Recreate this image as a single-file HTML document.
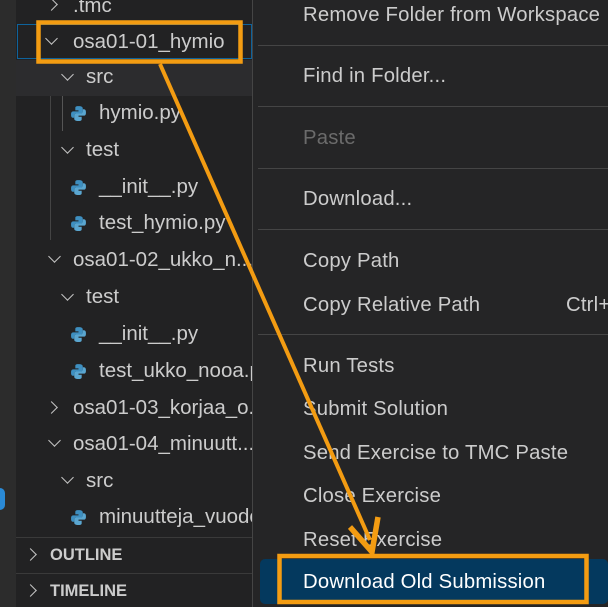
<!DOCTYPE html>
<html><head><meta charset="utf-8"><style>
*{margin:0;padding:0;box-sizing:border-box}
body{width:608px;height:607px;overflow:hidden;background:#252526;font-family:"Liberation Sans",sans-serif;position:relative}
.sb{position:absolute;left:0;top:0;width:252px;height:607px;background:#222223}
.act{position:absolute;left:0;top:0;width:16px;height:607px;background:#2c2c2c}
.t{position:absolute;color:#cccccc;font-size:20.5px;white-space:nowrap;line-height:24px}
.chev{position:absolute;width:9px;height:9px;border-right:1.8px solid #c5c5c5;border-bottom:1.8px solid #c5c5c5}
.dn{transform:rotate(45deg)}
.rt{transform:rotate(-45deg)}
.py{position:absolute;width:17px;height:17px}
.m{position:absolute;left:303px;color:#cccccc;font-size:20.3px;white-space:nowrap;line-height:24px;letter-spacing:0.2px}
.sep{position:absolute;left:258px;width:350px;height:1px;background:#454545}
.hdr{position:absolute;color:#cccccc;font-size:16.5px;font-weight:bold;line-height:20px}
.hl{position:absolute;left:16px;width:236px;height:1px;background:#3a3a3a}
</style></head><body>
<div class="sb"></div>
<div class="act"></div>
<div style="position:absolute;left:0;top:488px;width:5px;height:22px;background:#2a8ad6;border-radius:0 10px 10px 0"></div>
<div style="position:absolute;left:16px;top:60px;width:236px;height:36px;background:#2c2c2e"></div>
<div style="position:absolute;left:17px;top:24px;width:235px;height:35px;border:1px solid #0e639c"></div>
<div style="position:absolute;left:62px;top:96px;width:1px;height:35px;background:#555"></div>
<div style="position:absolute;left:50px;top:96px;width:1px;height:144px;background:#444"></div>

<div class="chev rt" style="left:47px;top:0px"></div><div class="t" style="left:73px;top:-6px">.tmc</div>
<div class="chev dn" style="left:47px;top:34px"></div><div class="t" style="left:73px;top:30px">osa01-01_hymio</div>
<div class="chev dn" style="left:63px;top:70px"></div><div class="t" style="left:86px;top:65px">src</div>
<svg class="py" style="left:70px;top:105px" viewBox="0 0 16 16"><path d="M8 1C5 1 5 2 5 3v2h3v1H3C1 6 1 8 1 9s0 3 2 3h1V10c0-1 1-2 2-2h4c1 0 2-1 2-2V3c0-1-1-2-4-2z" fill="#3e8fc0"/><path d="M8 15c3 0 3-1 3-2v-2H8v-1h5c2 0 2-2 2-3s0-3-2-3h-1v2c0 1-1 2-2 2H6c-1 0-2 1-2 2v3c0 1 1 2 4 2z" fill="#5aa6d0"/></svg>
<div class="t" style="left:99px;top:101px">hymio.py</div>
<div class="chev dn" style="left:63px;top:143px"></div><div class="t" style="left:86px;top:138px">test</div>
<svg class="py" style="left:70px;top:179px" viewBox="0 0 16 16"><path d="M8 1C5 1 5 2 5 3v2h3v1H3C1 6 1 8 1 9s0 3 2 3h1V10c0-1 1-2 2-2h4c1 0 2-1 2-2V3c0-1-1-2-4-2z" fill="#3e8fc0"/><path d="M8 15c3 0 3-1 3-2v-2H8v-1h5c2 0 2-2 2-3s0-3-2-3h-1v2c0 1-1 2-2 2H6c-1 0-2 1-2 2v3c0 1 1 2 4 2z" fill="#5aa6d0"/></svg>
<div class="t" style="left:99px;top:175px">__init__.py</div>
<svg class="py" style="left:70px;top:215px" viewBox="0 0 16 16"><path d="M8 1C5 1 5 2 5 3v2h3v1H3C1 6 1 8 1 9s0 3 2 3h1V10c0-1 1-2 2-2h4c1 0 2-1 2-2V3c0-1-1-2-4-2z" fill="#3e8fc0"/><path d="M8 15c3 0 3-1 3-2v-2H8v-1h5c2 0 2-2 2-3s0-3-2-3h-1v2c0 1-1 2-2 2H6c-1 0-2 1-2 2v3c0 1 1 2 4 2z" fill="#5aa6d0"/></svg>
<div class="t" style="left:99px;top:211px">test_hymio.py</div>
<div class="chev dn" style="left:50px;top:252px"></div><div class="t" style="left:73px;top:248px">osa01-02_ukko_n...</div>
<div class="chev dn" style="left:63px;top:290px"></div><div class="t" style="left:86px;top:285px">test</div>
<svg class="py" style="left:70px;top:326px" viewBox="0 0 16 16"><path d="M8 1C5 1 5 2 5 3v2h3v1H3C1 6 1 8 1 9s0 3 2 3h1V10c0-1 1-2 2-2h4c1 0 2-1 2-2V3c0-1-1-2-4-2z" fill="#3e8fc0"/><path d="M8 15c3 0 3-1 3-2v-2H8v-1h5c2 0 2-2 2-3s0-3-2-3h-1v2c0 1-1 2-2 2H6c-1 0-2 1-2 2v3c0 1 1 2 4 2z" fill="#5aa6d0"/></svg>
<div class="t" style="left:99px;top:322px">__init__.py</div>
<svg class="py" style="left:70px;top:363px" viewBox="0 0 16 16"><path d="M8 1C5 1 5 2 5 3v2h3v1H3C1 6 1 8 1 9s0 3 2 3h1V10c0-1 1-2 2-2h4c1 0 2-1 2-2V3c0-1-1-2-4-2z" fill="#3e8fc0"/><path d="M8 15c3 0 3-1 3-2v-2H8v-1h5c2 0 2-2 2-3s0-3-2-3h-1v2c0 1-1 2-2 2H6c-1 0-2 1-2 2v3c0 1 1 2 4 2z" fill="#5aa6d0"/></svg>
<div class="t" style="left:99px;top:359px">test_ukko_nooa.py</div>
<div class="chev rt" style="left:47px;top:403px"></div><div class="t" style="left:73px;top:396px">osa01-03_korjaa_o...</div>
<div class="chev dn" style="left:50px;top:436px"></div><div class="t" style="left:73px;top:432px">osa01-04_minuutt...</div>
<div class="chev dn" style="left:63px;top:473px"></div><div class="t" style="left:86px;top:469px">src</div>
<svg class="py" style="left:70px;top:509px" viewBox="0 0 16 16"><path d="M8 1C5 1 5 2 5 3v2h3v1H3C1 6 1 8 1 9s0 3 2 3h1V10c0-1 1-2 2-2h4c1 0 2-1 2-2V3c0-1-1-2-4-2z" fill="#3e8fc0"/><path d="M8 15c3 0 3-1 3-2v-2H8v-1h5c2 0 2-2 2-3s0-3-2-3h-1v2c0 1-1 2-2 2H6c-1 0-2 1-2 2v3c0 1 1 2 4 2z" fill="#5aa6d0"/></svg>
<div class="t" style="left:99px;top:505px">minuutteja_vuodessa.py</div>

<div class="hl" style="top:537px"></div>
<div class="chev rt" style="left:26px;top:550px"></div><div class="hdr" style="left:50px;top:545px">OUTLINE</div>
<div class="hl" style="top:573px"></div>
<div class="chev rt" style="left:26px;top:586px"></div><div class="hdr" style="left:50px;top:581px">TIMELINE</div>

<div style="position:absolute;left:252px;top:0;width:356px;height:607px;background:#252526;border-left:1px solid #454545"></div>
<div class="m" style="top:3px">Remove Folder from Workspace</div>
<div class="sep" style="top:45px"></div>
<div class="m" style="top:64px">Find in Folder...</div>
<div class="sep" style="top:106px"></div>
<div class="m" style="top:126px;color:#6b6b6b">Paste</div>
<div class="sep" style="top:168px"></div>
<div class="m" style="top:187px">Download...</div>
<div class="sep" style="top:229px"></div>
<div class="m" style="top:249px">Copy Path</div>
<div class="m" style="top:293px">Copy Relative Path</div>
<div class="m" style="top:293px;left:566px">Ctrl+</div>
<div class="sep" style="top:334px"></div>
<div class="m" style="top:354px">Run Tests</div>
<div class="m" style="top:397px">Submit Solution</div>
<div class="m" style="top:441px">Send Exercise to TMC Paste</div>
<div class="m" style="top:484px">Close Exercise</div>
<div class="m" style="top:528px">Reset Exercise</div>
<div style="position:absolute;left:260px;top:559px;width:348px;height:45px;background:#04395e;border-radius:5px"></div>
<div class="m" style="top:570px;color:#ffffff">Download Old Submission</div>

<svg style="position:absolute;left:0;top:0" width="608" height="607">
<rect x="38.5" y="22.5" width="202" height="39" fill="none" stroke="#f39c12" stroke-width="4.5"/>
<rect x="279.5" y="556" width="307" height="46" fill="none" stroke="#f39c12" stroke-width="4.5"/>
<line x1="160" y1="64" x2="370" y2="540" stroke="#f39c12" stroke-width="4"/>
<path d="M350 527 L372 552 L378 517" fill="none" stroke="#f39c12" stroke-width="5.5" stroke-linejoin="miter"/>
</svg>
</body></html>
